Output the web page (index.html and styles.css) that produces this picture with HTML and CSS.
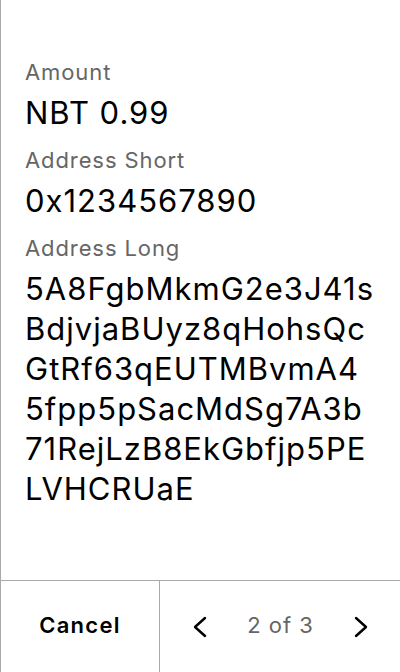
FILE: index.html
```html
<!DOCTYPE html>
<html>
<head>
<meta charset="utf-8">
<link rel="stylesheet" href="styles.css">
</head>
<body>
<div class="screen">
  <div class="content">
    <div class="field">
      <div class="label">Amount</div>
      <div class="value">NBT 0.99</div>
    </div>
    <div class="field">
      <div class="label">Address Short</div>
      <div class="value">0x1234567890</div>
    </div>
    <div class="field">
      <div class="label">Address Long</div>
      <div class="value long">
        <span class="line">5A8FgbMkmG2e3J41s</span>
        <span class="line">BdjvjaBUyz8qHohsQc</span>
        <span class="line">GtRf63qEUTMBvmA4</span>
        <span class="line">5fpp5pSacMdSg7A3b</span>
        <span class="line">71RejLzB8EkGbfjp5PE</span>
        <span class="line">LVHCRUaE</span>
      </div>
    </div>
  </div>
  <div class="footer">
    <div class="cancel"><span class="cancel-text">Cancel</span></div>
    <div class="pager">
      <svg class="chev" width="24" height="24" viewBox="0 0 24 24"><path d="M17 3 L7 12 L17 21" fill="none" stroke="#000" stroke-width="2.4" stroke-linecap="round" stroke-linejoin="round"/></svg>
      <span class="count">2 of 3</span>
      <svg class="chev" width="24" height="24" viewBox="0 0 24 24"><path d="M7 3 L17 12 L7 21" fill="none" stroke="#000" stroke-width="2.4" stroke-linecap="round" stroke-linejoin="round"/></svg>
    </div>
  </div>
</div>
</body>
</html>
```
FILE: styles.css
```css
html, body {
  margin: 0;
  padding: 0;
  background: #fff;
}
body {
  font-family: Inter, "Noto Sans", sans-serif;
  color: #000;
}
.screen {
  width: 400px;
  height: 672px;
  box-sizing: border-box;
  border-left: 1px solid #aaaaaa;
  display: flex;
  flex-direction: column;
}
.content {
  flex: 1;
  padding: 58px 0 0 24px;
  display: flex;
  flex-direction: column;
  gap: 13px;
}
.label {
  font-size: 22px;
  line-height: 28px;
  letter-spacing: 0.9px;
  color: #666;
  margin-bottom: 7px;
}
.value {
  font-size: 31px;
  line-height: 40px;
  letter-spacing: 1px;
  color: #000;
  white-space: nowrap;
}
.line {
  display: block;
}
.footer {
  height: 92px;
  box-sizing: border-box;
  border-top: 1px solid #aaaaaa;
  display: grid;
  grid-template-columns: 159px 1fr;
}
.cancel {
  border-right: 1px solid #aaaaaa;
  display: flex;
  align-items: center;
  justify-content: center;
}
.cancel-text {
  font-size: 22px;
  font-weight: 600;
  letter-spacing: 1.3px;
  margin-bottom: 4px;
}
.pager {
  display: flex;
  align-items: center;
  justify-content: space-between;
  padding: 0 27px 0 28px;
}
.chev {
  display: block;
}
.count {
  font-size: 22px;
  letter-spacing: 1px;
  color: #666;
  margin-bottom: 4px;
}
```
